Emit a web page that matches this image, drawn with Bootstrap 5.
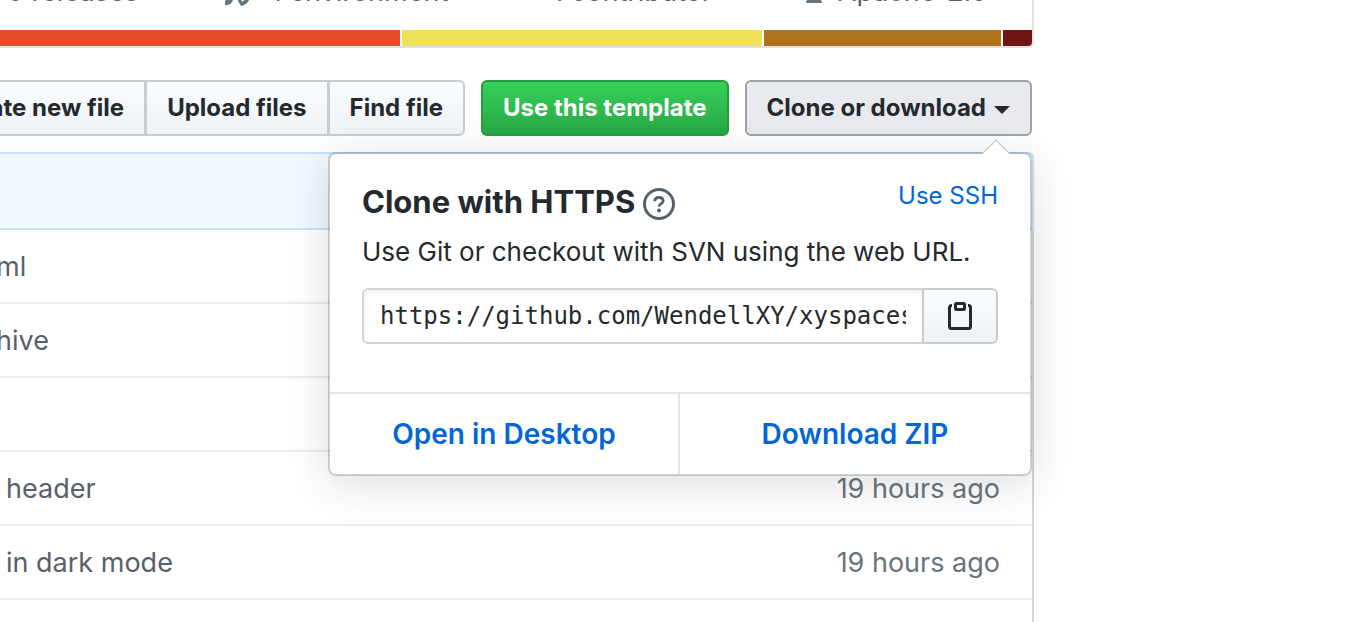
<!DOCTYPE html>
<html lang="en">
<head>
<meta charset="utf-8">
<meta name="viewport" content="width=device-width, initial-scale=1">
<title>Clone or download</title>
<link href="https://cdn.jsdelivr.net/npm/bootstrap@5.3.0/dist/css/bootstrap.min.css" rel="stylesheet">
<script src="https://cdn.jsdelivr.net/npm/bootstrap@5.3.0/dist/js/bootstrap.bundle.min.js"></script>
<style>
  body { font-family: Inter, sans-serif; font-size: 26px; line-height: 32px; color: #24292e; background: #fff; overflow: hidden; }
  a { color: #0366d6; text-decoration: none; }
  .repo-shell { padding-right: 318px; height: 100vh; overflow: hidden; }
  .stats { border: solid #dfe2e5; border-width: 0 2px 2px 0; border-radius: 0 0 6px 0; overflow: hidden; margin-bottom: 32px; }
  .stat-list { height: 30px; font-size: 27px; line-height: 36px; color: #586069; }
  .stat-list li { margin-top: -26px; height: 32px; flex: 0 0 27%; white-space: nowrap; }
  .stat-list svg { fill: #6a737d; flex: none; }
  .langs { height: 16px; gap: 2px; }
  .langs span { flex-basis: 0; }
  .toolbar { gap: 16px; padding-right: 2px; margin-bottom: 16px; }
  .tool { font-size: 24px; font-weight: 700; line-height: 36px; padding: 8px 20px; border: 2px solid #c9ccd0; border-radius: 6px; color: #24292e; background: linear-gradient(#fafbfc, #eff3f6); white-space: nowrap; }
  .btn-group > .tool:not(:first-child) { margin-left: -2px; }
  .tool-green { color: #fff; background: linear-gradient(#34d058, #28a745); border-color: #2a9a42; }
  .tool-open { background: #e9eaef; border-color: #9fa3a8; }
  .tool-open::after { margin-left: 8px; border-width: 8px 8px 0; vertical-align: 2px; }
  .files { border-right: 2px solid #d1d5da; border-radius: 0 6px 0 0; }
  .commit-bar { height: 78px; background: #f1f8ff; border: solid #c8e1ff; border-width: 2px 2px 2px 0; border-radius: 0 6px 0 0; margin-right: -2px; }
  .file-row { height: 74px; border-bottom: 2px solid #eaecef; padding: 2px 32px 0 6px; color: #586069; font-size: 27px; }
  .file-row.is-cut { padding-left: 0; }
  .is-cut span { margin-left: -4px; }
  .file-row time { color: #6a737d; }
  .popup-menu { position: absolute; top: 72px; right: 2px; width: 704px; background: #fff; background-clip: padding-box; border: 2px solid rgba(27,31,35,.2); border-radius: 8px; box-shadow: 0 8px 40px rgba(27,31,35,.15); z-index: 5; }
  .popup-tip { position: absolute; top: -16px; right: 18px; }
  .popup-body { padding: 30px 32px 48px; }
  .popup-head { margin-bottom: 16px; }
  .popup-note { margin-bottom: 20px; }
  .popup-title { font-size: 31px; font-weight: 700; line-height: 36px; }
  .help-link { height: 32px; margin-top: 4px; }
  .ssh-link { font-size: 24px; line-height: 24px; }
  .url-field { min-width: 0; height: 56px; border: 2px solid #d1d5da; border-radius: 6px 0 0 6px; padding: 0 16px; font: 24px/36px "DejaVu Sans Mono", monospace; color: #24292e; box-shadow: inset 0 2px 4px rgba(27,31,35,.075); }
  .copy-btn { width: 76px; margin-left: -2px; padding: 0; border: 2px solid #c9ccd0; border-radius: 0 6px 6px 0; background: linear-gradient(#fafbfc, #eff3f6); }
  .popup-foot { border-top: 2px solid #e1e4e8; }
  .popup-foot a { padding: 24px 0; font-size: 28px; font-weight: 600; }
  .popup-foot a:first-child { border-right: 2px solid #e1e4e8; }
</style>
</head>
<body>
<main class="repo-shell">
  <section class="stats">
    <ul class="stat-list list-unstyled d-flex justify-content-end m-0">
      <li class="d-flex justify-content-center gap-2"><svg width="24" height="32" viewBox="0 0 24 32" aria-hidden="true"><path d="M2 5h9l12 11-9 9L2 13z"/></svg>0 releases</li>
      <li class="d-flex justify-content-center gap-2"><svg width="40" height="32" viewBox="0 0 40 32" aria-hidden="true"><path d="M26 0C18 1 11 7 8 14l6 6C21 17 26 9 26 0zM5 19c3 0 6 3 5 7-1 3-3 5-8 5 0-5 1-9 3-12zM14 25l4 7c5-1 8-4 10-10l-4-2-1 5-4 3-1-4z"/></svg>1 environment</li>
      <li class="d-flex justify-content-center gap-2"><svg width="28" height="32" viewBox="0 0 28 32" aria-hidden="true"><path d="M8 5h8v8l6 4v6H2v-6l6-4z"/></svg>1 contributor</li>
      <li class="d-flex justify-content-center gap-2"><svg width="32" height="32" viewBox="0 0 32 32" aria-hidden="true"><path d="M14 1h4v3h10v3l4 10c-2 4-8 4-10 0l4-9h-8v17h3c2 1 3 2 3 3.500 0 .5-.5.5-1 .5H9c-.5 0-1 0-1-.5C8 27 9 26 11 25h3V8H6l4 9c-2 4-8 4-10 0L4 7V4h10z"/></svg>Apache-2.0</li>
    </ul>
    <div class="langs d-flex">
      <span style="flex-grow:400;background:#e34c26"></span>
      <span style="flex-grow:360;background:#f1e05a"></span>
      <span style="flex-grow:237;background:#b07219"></span>
      <span style="flex-grow:29;background:#701516"></span>
    </div>
  </section>
  <div class="toolbar d-flex justify-content-end position-relative">
    <div class="btn-group">
      <button class="btn tool" type="button">Create new file</button>
      <button class="btn tool" type="button">Upload files</button>
      <button class="btn tool" type="button">Find file</button>
    </div>
    <button class="btn tool tool-green" type="button">Use this template</button>
    <button class="btn tool tool-open dropdown-toggle" type="button" aria-expanded="true">Clone or download</button>
    <div class="popup-menu">
      <svg class="popup-tip" width="32" height="17" viewBox="0 0 32 17" aria-hidden="true"><path d="M2 16 16 2 30 16V17H2z" fill="#fff"/><path d="M2 16 16 2 30 16" fill="none" stroke="#cfd2d5" stroke-width="1.500"/></svg>
      <div class="popup-body">
        <div class="popup-head d-flex align-items-start">
          <h1 class="popup-title m-0">Clone with HTTPS</h1>
          <a class="help-link d-flex ms-2" href="#" aria-label="Which remote URL should I use?">
            <svg width="32" height="32" viewBox="0 0 32 32" fill="none" stroke="#586069" aria-hidden="true"><circle cx="16" cy="16" r="14.500" stroke-width="3"/><path d="M11.800 13.200c0-2.300 1.700-3.700 4.200-3.700s4.200 1.400 4.200 3.400c0 3-4.200 2.800-4.200 5.600" stroke-width="2.800"/><circle cx="16" cy="22.500" r="2" fill="#586069" stroke="none"/></svg>
          </a>
          <a class="ssh-link ms-auto" href="#">Use SSH</a>
        </div>
        <p class="popup-note">Use Git or checkout with SVN using the web URL.</p>
        <div class="d-flex">
          <input class="url-field flex-grow-1" type="text" aria-label="Clone URL" value="https://github.com/WendellXY/xyspaces.git" readonly>
          <button class="copy-btn d-flex align-items-center justify-content-center" type="button" aria-label="Copy to clipboard">
            <svg width="24" height="28" viewBox="0 0 24 28" fill="none" stroke="#24292e" stroke-width="3" aria-hidden="true"><path d="M4 3.500H3.500a2 2 0 0 0-2 2v19a2 2 0 0 0 2 2h17a2 2 0 0 0 2-2v-19a2 2 0 0 0-2-2H20"/><rect x="7.500" y="1.500" width="9" height="6" rx="1"/></svg>
          </button>
        </div>
      </div>
      <div class="popup-foot d-flex text-center"><a class="col-6" href="#">Open in Desktop</a><a class="col-6" href="#">Download ZIP</a></div>
    </div>
  </div>
  <section class="files">
    <div class="commit-bar"></div>
    <div class="file-row is-cut d-flex align-items-center"><span>ml</span></div>
    <div class="file-row is-cut d-flex align-items-center"><span>hive</span></div>
    <div class="file-row"></div>
    <div class="file-row d-flex align-items-center justify-content-between"><span>header</span><time>19 hours ago</time></div>
    <div class="file-row d-flex align-items-center justify-content-between"><span>in dark mode</span><time>19 hours ago</time></div>
    <div class="file-row"></div>
  </section>
</main>
</body>
</html>
